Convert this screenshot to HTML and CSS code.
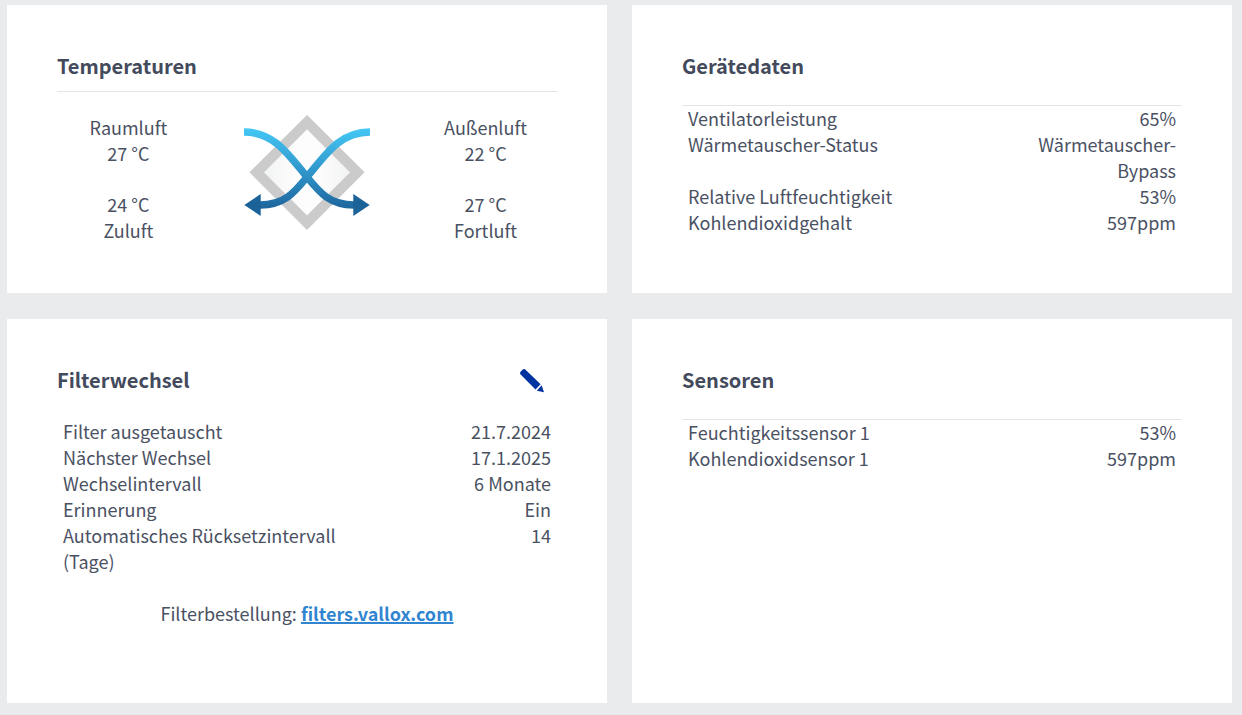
FILE: index.html
```
<!DOCTYPE html>
<html lang="de">
<head>
    <meta charset="UTF-8">
    <meta name="viewport" content="width=device-width, initial-scale=1.0">
    <title>Vallox</title>
    <link rel="stylesheet" href="styles.css">
</head>
<body>
    <main class="dashboard">
        <section class="card">
            <h2 class="underlined">Temperaturen</h2>
            <div class="temperatures">
                <div class="air">
                    <div>Raumluft<br>27 °C</div>
                    <div>24 °C<br>Zuluft</div>
                </div>
                <svg class="exchanger" width="126" height="117" viewBox="0 -1 126 117" aria-hidden="true">
                    <defs>
                        <linearGradient id="flow" gradientUnits="userSpaceOnUse" x1="0" y1="13" x2="0" y2="101">
                            <stop offset="0" stop-color="#44c8f5"/>
                            <stop offset="0.55" stop-color="#2d8fc5"/>
                            <stop offset="1" stop-color="#1a5c94"/>
                        </linearGradient>
                        <linearGradient id="core">
                            <stop offset="0" stop-color="#eff2f0"/>
                            <stop offset="0.4" stop-color="#fdfdfd"/>
                            <stop offset="0.6" stop-color="#fdfdfd"/>
                            <stop offset="1" stop-color="#eff2f0"/>
                        </linearGradient>
                    </defs>
                    <path d="M63 7.2L113.300 57.3L63 107.7L12.700 57.3Z" fill="url(#core)" stroke="#cbcbcb" stroke-width="10.3"/>
                    <g fill="none" stroke="url(#flow)" stroke-width="7.4">
                        <path d="M0 17C30 17 44 39 63 62C76 78 86 90 110 90"/>
                        <path d="M126 17C96 17 82 39 63 62C50 78 40 90 16 90"/>
                    </g>
                    <path d="M109.300 79L125.700 90L109.300 101ZM16.700 79L0.300 90L16.700 101Z" fill="#1b6299"/>
                </svg>
                <div class="air">
                    <div>Außenluft<br>22 °C</div>
                    <div>27 °C<br>Fortluft</div>
                </div>
            </div>
        </section>

        <section class="card">
            <h2>Gerätedaten</h2>
            <table class="lined">
                <tr><td>Ventilatorleistung</td><td>65%</td></tr>
                <tr><td>Wärmetauscher-Status</td><td>Wärmetauscher-Bypass</td></tr>
                <tr><td>Relative Luftfeuchtigkeit</td><td>53%</td></tr>
                <tr><td>Kohlendioxidgehalt</td><td>597ppm</td></tr>
            </table>
        </section>

        <section class="card">
            <div class="card-head">
                <h2>Filterwechsel</h2>
                <button class="edit" type="button" aria-label="Bearbeiten">
                    <svg width="24" height="24" viewBox="0 0 24 24" fill="#0033a0">
                        <path d="M0.600 5.600Q-0.600 4 0.800 2.500L2.200 1Q4-0.700 5.800 0.900L20.600 15.200L15.500 20.400Z"/>
                        <path d="M21.600 16.300L24 23.200L16.800 21.700Z"/>
                    </svg>
                </button>
            </div>
            <table>
                <tr><td>Filter ausgetauscht</td><td>21.7.2024</td></tr>
                <tr><td>Nächster Wechsel</td><td>17.1.2025</td></tr>
                <tr><td>Wechselintervall</td><td>6 Monate</td></tr>
                <tr><td>Erinnerung</td><td>Ein</td></tr>
                <tr><td>Automatisches Rücksetzintervall (Tage)</td><td>14</td></tr>
            </table>
            <p class="order">Filterbestellung: <a href="#">filters.vallox.com</a></p>
        </section>

        <section class="card">
            <h2>Sensoren</h2>
            <table class="lined">
                <tr><td>Feuchtigkeitssensor 1</td><td>53%</td></tr>
                <tr><td>Kohlendioxidsensor 1</td><td>597ppm</td></tr>
            </table>
        </section>
    </main>
</body>
</html>
```
FILE: styles.css
```
body {
    margin: 0;
    background-color: #eaebed;
    color: #4a5163;
    font-family: "Source Sans Pro", "Noto Sans CJK SC", sans-serif;
    font-size: 18px;
    line-height: 26px;
}

.dashboard {
    display: grid;
    grid-template-columns: 1fr 1fr;
    gap: 26px 25px;
    padding: 5px 10px 11px 7px;
}

/* Cards */
.card {
    padding: 48px 50px 50px;
    background-color: #fff;
}

h2 {
    margin: 0 0 26px;
    color: #434a5c;
    font-size: 20px;
    line-height: 26px;
    font-weight: bold;
}

h2.underlined {
    margin-bottom: 22px;
    padding-bottom: 12px;
    border-bottom: 1px solid #e3e4e5;
}

.card-head {
    display: flex;
    justify-content: space-between;
    align-items: flex-start;
}

.card-head h2 {
    margin-bottom: 25px;
}

.edit {
    margin: 0;
    padding: 2px 13px 0;
    border: none;
    background: none;
    cursor: pointer;
}

.edit svg {
    display: block;
}

/* Temperatures */
.temperatures {
    display: grid;
    grid-template-columns: 2fr 3fr 2fr;
    text-align: center;
}

.air {
    display: grid;
    gap: 25px;
}

.exchanger {
    justify-self: center;
}

/* Value tables */
table {
    width: 100%;
    table-layout: fixed;
    border-spacing: 0;
}

table.lined {
    box-shadow: inset 0 1px #e3e4e5;
}

td {
    padding: 0 6px;
    vertical-align: top;
}

td:first-child {
    width: 65%;
    box-sizing: border-box;
}

td:last-child {
    text-align: right;
}

.order {
    margin: 26px 0 27px;
    text-align: center;
}

.order a {
    color: #3185d0;
    font-weight: bold;
    text-decoration-thickness: 2px;
}
```
